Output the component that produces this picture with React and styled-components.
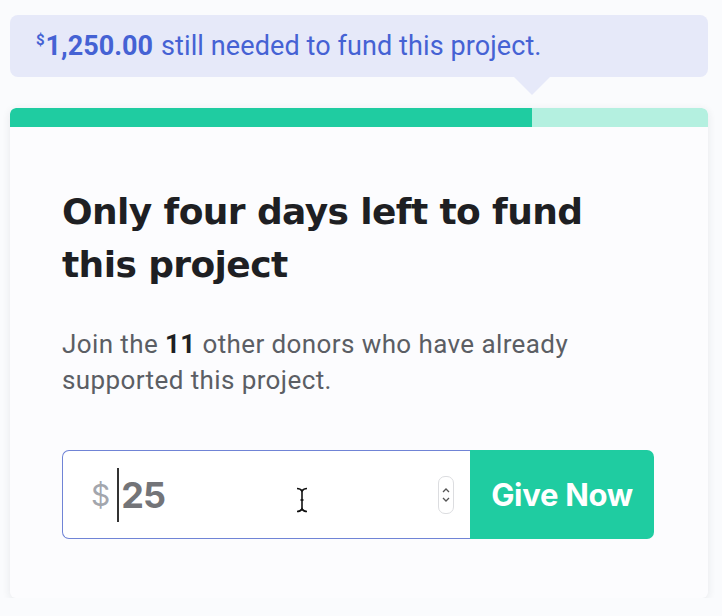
import React from "react"
import styled, { createGlobalStyle } from "styled-components"

const GlobalStyle = createGlobalStyle`
  html, body {
    margin: 0;
    background: #fafbfd;
  }
  body {
    font-family: "Roboto", "Liberation Sans", sans-serif;
  }
`

const colors = {
  green: "#1fcca1",
  mint: "#b4f0e0",
  blue: "#4562d4",
  tip: "#e6e9f9",
  ink: "#1e1f23",
  gray: "#5b5e64",
  border: "#7084d6",
}

const Page = styled.div`
  width: 698px;
  padding: 15px 0 0 10px;
`

const Tooltip = styled.div`
  position: relative;
  height: 62px;
  display: flex;
  align-items: center;
  padding: 0 26px;
  background: ${colors.tip};
  border-radius: 8px;
  color: ${colors.blue};
  font-size: 27px;
  letter-spacing: 0.1px;

  &::after {
    content: "";
    position: absolute;
    left: 504px;
    top: 100%;
    border-left: 18px solid transparent;
    border-right: 18px solid transparent;
    border-top: 18px solid ${colors.tip};
  }
`

const Amount = styled.strong`
  font-weight: 700;
  margin-right: 8px;
  letter-spacing: 0;
  sup {
    font-size: 15px;
    vertical-align: 10px;
    margin-right: 1px;
  }
`

const Card = styled.section`
  margin-top: 31px;
  background: #fcfcfe;
  border-radius: 6px;
  box-shadow: 0 2px 8px rgba(30, 40, 60, 0.09);
  overflow: hidden;
`

const Progress = styled.div`
  height: 19px;
  background: ${colors.mint};
  border-radius: 6px 6px 0 0;
  overflow: hidden;
`

const Fill = styled.div`
  height: 100%;
  background: ${colors.green};
`

const Body = styled.div`
  padding: 58px 52px 59px;
`

const Heading = styled.h2`
  margin: 0;
  font-family: "DejaVu Sans", "Inter", sans-serif;
  font-weight: 700;
  font-size: 36px;
  line-height: 53px;
  letter-spacing: -0.6px;
  color: ${colors.ink};
  max-width: 570px;
`

const Text = styled.p`
  margin: 35px 0 0;
  font-size: 26px;
  line-height: 36px;
  letter-spacing: 0.4px;
  color: ${colors.gray};
  max-width: 530px;
  b {
    color: ${colors.ink};
    font-weight: 700;
  }
`

const Form = styled.div`
  margin-top: 52px;
  display: flex;
  width: 592px;
  height: 89px;
`

const Field = styled.div`
  position: relative;
  flex: 1;
  display: flex;
  align-items: center;
  padding: 0 16px 0 28px;
  background: #fff;
  border: 1.5px solid ${colors.border};
  border-right: none;
  border-radius: 7px 0 0 7px;
  font-family: "Inter", "Liberation Sans", sans-serif;
`

const Dollar = styled.span`
  font-size: 30px;
  color: #a3a6ad;
  margin-right: 7px;
`

const Caret = styled.span`
  width: 2px;
  height: 54px;
  background: #333;
  margin-right: 2px;
`

const Value = styled.span`
  flex: 1;
  font-size: 36px;
  font-weight: 700;
  letter-spacing: -1px;
  color: #737478;
`

const Spinner = styled.span`
  width: 14px;
  height: 36px;
  border: 1px solid #dcdde0;
  border-radius: 7px;
  display: flex;
  align-items: center;
  justify-content: center;
`

const Cursor = styled.svg`
  position: absolute;
  left: 233px;
  top: 36px;
`

const GiveButton = styled.button`
  width: 184px;
  border: none;
  border-radius: 0 7px 7px 0;
  background: ${colors.green};
  color: #fff;
  font-family: "Inter", "Liberation Sans", sans-serif;
  font-weight: 700;
  font-size: 31px;
  letter-spacing: -0.3px;
  cursor: pointer;
`

const App = () => (
  <Page>
    <GlobalStyle />
    <Tooltip>
      <Amount>
        <sup>$</sup>1,250.00
      </Amount>
      still needed to fund this project.
    </Tooltip>
    <Card>
      <Progress>
        <Fill style={{ width: "74.8%" }} />
      </Progress>
      <Body>
        <Heading>Only four days left to fund this project</Heading>
        <Text>
          Join the <b>11</b> other donors who have already supported this
          project.
        </Text>
        <Form>
          <Field>
            <Dollar>$</Dollar>
            <Caret />
            <Value>25</Value>
            <Spinner>
              <svg width="8" height="22" viewBox="0 0 8 22" fill="none" stroke="#555" strokeWidth="1.3">
                <path d="M1 8l3-3 3 3" />
                <path d="M1 14l3 3 3-3" />
              </svg>
            </Spinner>
            <Cursor width="12" height="26" viewBox="0 0 12 26" fill="none" stroke="#111" strokeWidth="1.6">
              <path d="M1 1.5c2.5 0 4 1 5 2.5 1-1.5 2.5-2.5 5-2.5" />
              <path d="M6 4v18" />
              <path d="M1 24.5c2.5 0 4-1 5-2.5 1 1.5 2.5 2.5 5 2.5" />
              <path d="M4.5 13h3" />
            </Cursor>
          </Field>
          <GiveButton>Give Now</GiveButton>
        </Form>
      </Body>
    </Card>
  </Page>
)

export default App
